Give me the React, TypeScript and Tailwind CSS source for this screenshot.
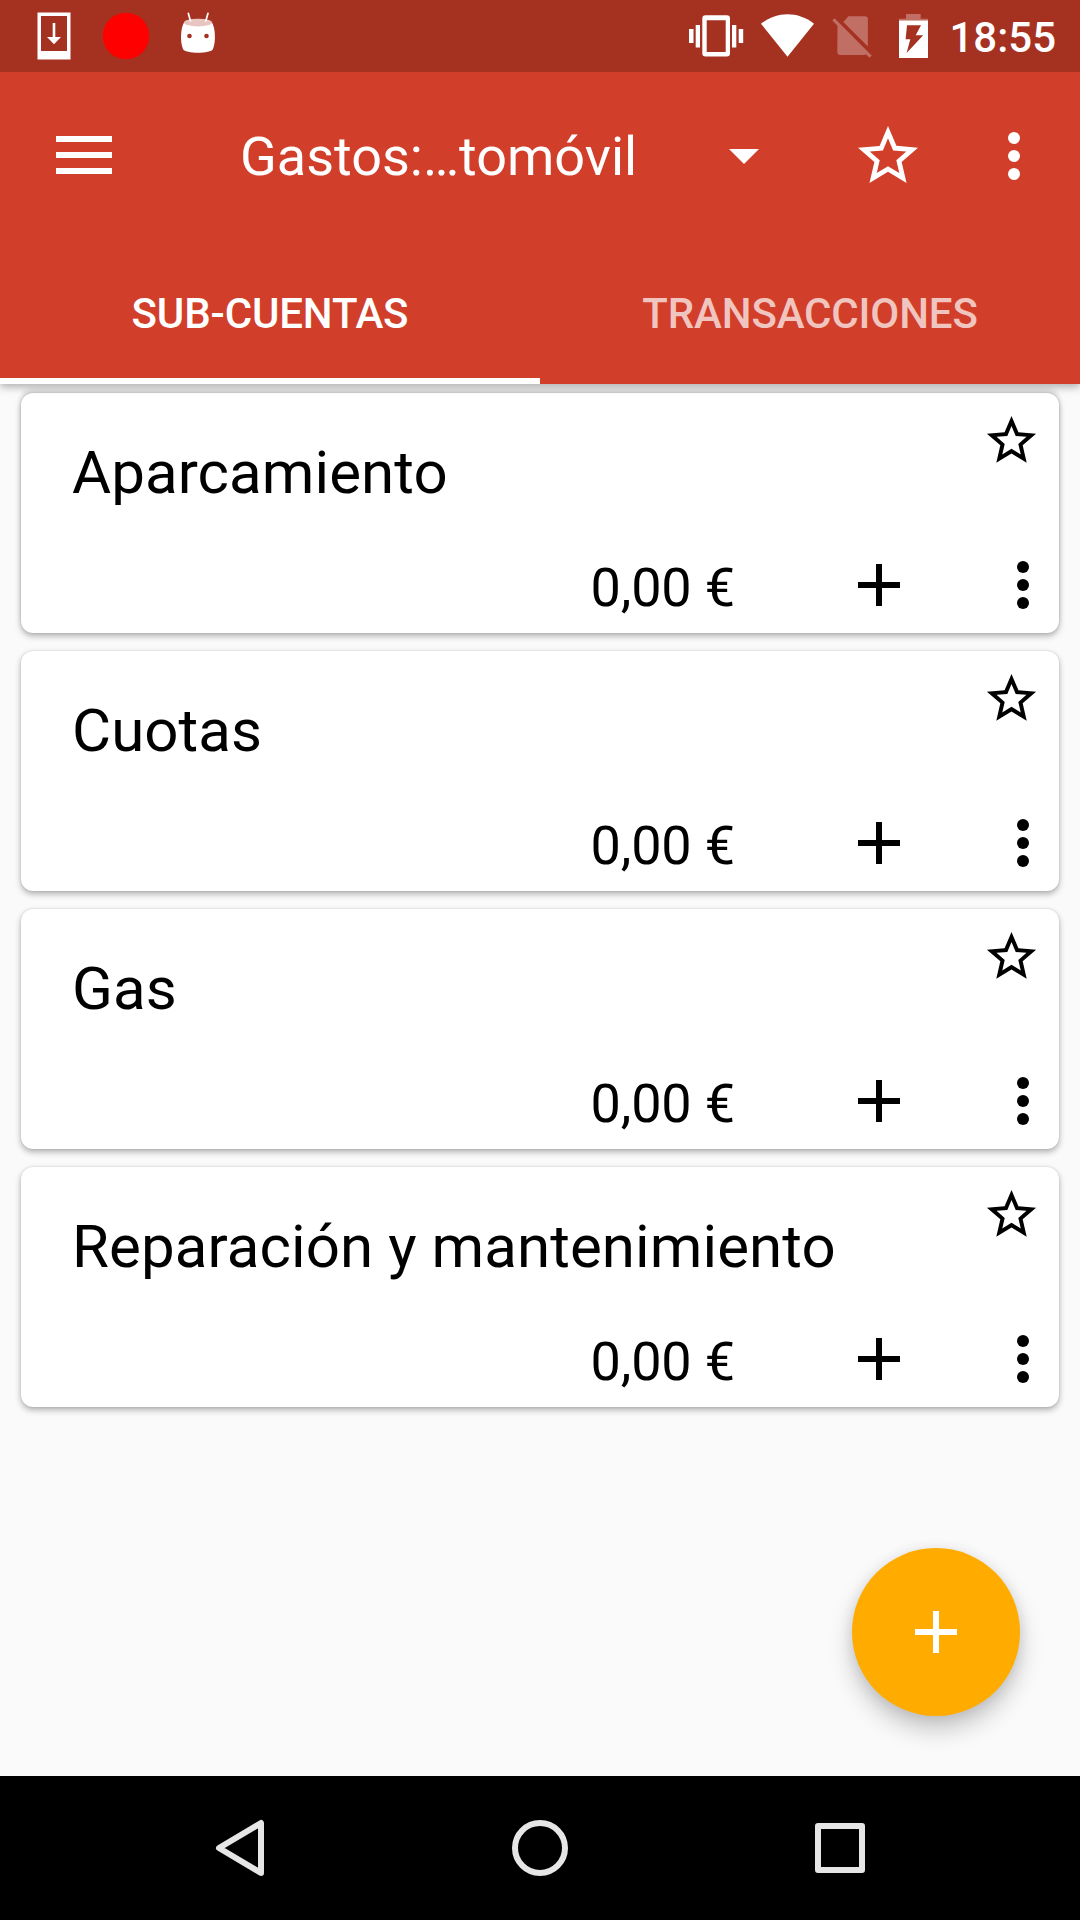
import React from "react";

const accounts = ["Aparcamiento", "Cuotas", "Gas", "Reparación y mantenimiento"];

function Star({ className }: { className: string }) {
  return (
    <svg viewBox="0 0 24 24" fill="currentColor" className={className}>
      <path d="M22 9.24l-7.19-.62L12 2 9.19 8.63 2 9.24l5.46 4.73L5.82 21 12 17.27 18.18 21l-1.63-7.03L22 9.24zM12 15.4l-3.76 2.27 1-4.28-3.32-2.88 4.38-.38L12 6.1l1.71 4.04 4.38.38-3.32 2.88 1 4.28L12 15.4z" />
    </svg>
  );
}

function More() {
  return (
    <svg viewBox="0 0 72 72" fill="currentColor" className="size-[72px] shrink-0">
      <circle cx="36" cy="18" r="6" />
      <circle cx="36" cy="36" r="6" />
      <circle cx="36" cy="54" r="6" />
    </svg>
  );
}

function Plus() {
  return (
    <svg viewBox="0 0 72 72" fill="currentColor" className="size-[72px] shrink-0">
      <path d="M57 39H39v18h-6V39H15v-6h18V15h6v18h18z" />
    </svg>
  );
}

function StatusBar() {
  return (
    <div className="flex h-[72px] items-center justify-between bg-[#a53121] text-white">
      <svg viewBox="0 0 240 72" className="h-[72px] w-[240px]">
        <path fill="#fff" fillRule="evenodd" d="M37.5 12.5h33v47h-33zM41 16v35h26V16z" />
        <path fill="#fff" d="M52.7 23h2.6v14H61l-7 7.2L47 37h5.7z" />
        <circle cx="126" cy="36" r="23.2" fill="#f00" />
        <path fill="#fff" d="M184 22.500C188 18 208 18 212 22.500C215.500 28 216 42 213 49C211 54 185 54 183 49C180 42 180.500 28 184 22.500Z" />
        <ellipse cx="198" cy="22.600" rx="14" ry="3.900" fill="#e8c5c1" />
        <path stroke="#fff" strokeWidth="1.700" strokeLinecap="round" d="M188.300 13.300l2.200 7.700M208 13.300l-2.200 7.700" />
        <circle cx="189.500" cy="36" r="2.300" fill="#a53121" />
        <circle cx="206.500" cy="36" r="2.300" fill="#a53121" />
      </svg>
      <div className="flex items-center">
        <svg viewBox="680 0 260 72" className="h-[72px] w-[260px]">
          <path fill="#fff" fillRule="evenodd" d="M705.500 15.300h21.300a3.200 3.200 0 0 1 3.200 3.200v34.800a3.200 3.200 0 0 1-3.200 3.200h-21.300a3.200 3.200 0 0 1-3.200-3.200V18.500a3.200 3.200 0 0 1 3.200-3.200zM706.700 20.300V52h19V20.300z" />
          <path fill="#fff" d="M695.700 25h4.300v22.500h-4.300zM689 29h4.500v14H689zM732 25h4.300v22.500H732zM738.700 29h4.500v14h-4.500z" />
          <path fill="#fff" d="M761 23.700C776.500 11 798.500 11 814 23.700L787.500 56.800Z" />
          <g fill="#c16f64">
            <path d="M848.500 16.300h16.200a3.200 3.200 0 0 1 3.200 3.200v27L843.300 22z" />
            <path d="M837.500 23.500L867 53.200q-.8 1.800-3 1.800h-23.500a3.200 3.200 0 0 1-3.200-3.200z" />
            <path d="M834.500 18.300l37.200 37.200-2.200 2.200-37.200-37.200z" />
          </g>
          <path fill="#c16f64" d="M899 20.700v-2h7V14h14.700v4.700h7.300v2z" />
          <path fill="#fff" fillRule="evenodd" d="M899 20.500h29V58h-29zM907 25.300l-1.400 14h4.700L906.600 53l16.600-17.700h-7.500l5.300-10z" />
        </svg>
        <span className="mr-[24px] ml-[9px] w-[107px] pt-[2px] text-right font-medium text-[42px] leading-[75px]">18:55</span>
      </div>
    </div>
  );
}

function Header() {
  return (
    <header className="relative z-10 flex flex-col bg-[#d13e2a] text-white shadow-[0_3px_8px_rgba(0,0,0,0.3)]">
      <StatusBar />
      <div className="flex h-[168px] items-center pr-[30px] pl-[48px]">
        <svg viewBox="0 0 72 72" fill="currentColor" className="size-[72px]">
          <path d="M8 16h56v6H8zM8 32h56v6H8zM8 48h56v6H8z" />
        </svg>
        <h1 className="ml-[120px] w-[468px] whitespace-nowrap pt-[2px] text-[54px] leading-[72px]">Gastos:…tomóvil</h1>
        <svg viewBox="0 0 72 72" fill="currentColor" className="size-[72px]">
          <path d="M21 29l15 15 15-15z" />
        </svg>
        <Star className="ml-[72px] size-[72px]" />
        <div className="ml-[54px]"><More /></div>
      </div>
      <nav className="grid h-[144px] grid-cols-2 text-center font-medium text-[42px] leading-[72px] tracking-[-0.15px]">
        <div className="h-[144px] border-b-[6px] border-white pt-[38px]">SUB-CUENTAS</div>
        <div className="h-[144px] pt-[38px] text-[#f1c5bf]">TRANSACCIONES</div>
      </nav>
    </header>
  );
}

function AccountCard({ name }: { name: string }) {
  return (
    <article className="flex h-[240px] flex-col justify-between rounded-[12px] bg-white text-black shadow-[0_3px_6px_rgba(0,0,0,0.3),0_0_2px_rgba(0,0,0,0.15)] first:shadow-[0_3px_6px_rgba(0,0,0,0.3),0_0_2px_rgba(0,0,0,0.15),0_-5px_5px_rgba(0,0,0,0.1)]">
      <div className="flex items-start justify-between pr-[18px] pl-[51px]">
        <h2 className="pt-[44px] text-[60px] leading-[72px] tracking-[0.09px]">{name}</h2>
        <Star className="mt-[18px] size-[59px]" />
      </div>
      <div className="flex items-center justify-end pb-[12px]">
        <span className="h-[72px] pt-[3px] text-[54px] leading-[72px] tracking-[-0.15px]">0,00 €</span>
        <div className="ml-[108px]"><Plus /></div>
        <div className="ml-[72px]"><More /></div>
      </div>
    </article>
  );
}

export default function App() {
  return (
    <div className="relative flex h-[1920px] w-[1080px] flex-col overflow-hidden bg-[#fafafa] font-['Roboto',sans-serif]">
      <Header />
      <main className="flex flex-1 flex-col gap-[18px] px-[21px] pt-[9px]">
        {accounts.map((name) => (
          <AccountCard key={name} name={name} />
        ))}
      </main>
      <button className="absolute right-[60px] bottom-[204px] flex size-[168px] items-center justify-center rounded-full bg-[#ffab00] text-white shadow-[0_14px_24px_rgba(0,0,0,0.2),0_2px_14px_rgba(0,0,0,0.1)]">
        <Plus />
      </button>
      <footer className="flex h-[144px] items-center justify-center gap-[228px] bg-black">
        <svg viewBox="0 0 72 72" fill="none" stroke="#e6e6e6" strokeWidth="6" strokeLinejoin="round" className="size-[72px]">
          <path d="M57 11v50L15 36z" />
        </svg>
        <svg viewBox="0 0 72 72" fill="none" stroke="#e6e6e6" strokeWidth="6" className="size-[72px]">
          <circle cx="36" cy="36" r="25" />
        </svg>
        <svg viewBox="0 0 72 72" fill="none" stroke="#e6e6e6" strokeWidth="6" strokeLinejoin="round" className="size-[72px]">
          <path d="M14 14h44v44H14z" />
        </svg>
      </footer>
    </div>
  );
}
